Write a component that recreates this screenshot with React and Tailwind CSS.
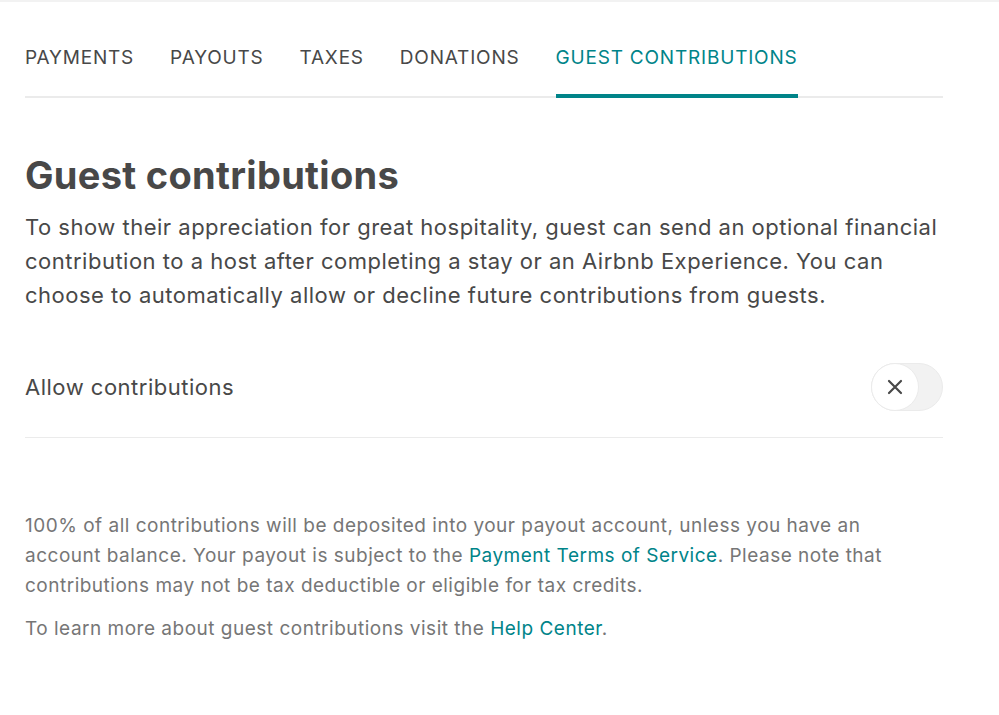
import React, { useState } from "react";

const tabs = ["Payments", "Payouts", "Taxes", "Donations", "Guest contributions"];

const App = () => {
  const [active, setActive] = useState("Guest contributions");
  const [allow, setAllow] = useState(false);

  return (
    <div
      className="min-h-screen bg-white border-t-2 border-[#f2f2f2] text-[#484848]"
      style={{ fontFamily: "Inter, 'Noto Sans', sans-serif" }}
    >
      <div className="w-[918px] ml-[25px]">
        <nav className="flex gap-[36px] border-b-2 border-[#ebebeb] pt-[43px]">
          {tabs.map((t) => (
            <button
              key={t}
              onClick={() => setActive(t)}
              className={
                "uppercase text-[19px] leading-[26px] tracking-[0.8px] pb-[23px] -mb-[2px] border-b-4 " +
                (active === t
                  ? "text-[#008489] border-[#008489]"
                  : "text-[#484848] border-transparent")
              }
            >
              {t}
            </button>
          ))}
        </nav>

        <h1 className="mt-[55px] text-[38px] leading-[44px] font-bold tracking-[0.3px]">
          Guest contributions
        </h1>
        <p className="mt-[13px] text-[22px] leading-[34px] tracking-[0.5px]">
          To show their appreciation for great hospitality, guest can send an optional financial
          contribution to a host after completing a stay or an Airbnb Experience. You can choose to
          automatically allow or decline future contributions from guests.
        </p>

        <div className="mt-[51px] flex items-center justify-between pb-[26px] border-b border-[#ebebeb]">
          <span className="text-[22px] leading-[34px] tracking-[0.5px]">Allow contributions</span>
          <button
            onClick={() => setAllow(!allow)}
            className={
              "relative w-[72px] h-[48px] rounded-full border " +
              (allow ? "bg-[#008489] border-[#008489]" : "bg-[#f2f2f2] border-[#ebebeb]")
            }
          >
            <span
              className={
                "absolute top-[-1px] w-[48px] h-[48px] rounded-full bg-white border border-[#ebebeb] flex items-center justify-center " +
                (allow ? "left-[23px]" : "left-[-1px]")
              }
            >
              {allow ? (
                <svg width="18" height="18" viewBox="0 0 24 24" fill="none" stroke="#008489" strokeWidth="3">
                  <path d="M4 12l5 5 11-11" />
                </svg>
              ) : (
                <svg width="16" height="16" viewBox="0 0 16 16" fill="none" stroke="#484848" strokeWidth="2.2" strokeLinecap="round">
                  <path d="M2 2l12 12M14 2L2 14" />
                </svg>
              )}
            </span>
          </button>
        </div>

        <div className="mt-[73px] w-[880px] text-[19px] leading-[30px] tracking-[0.5px] text-[#767676]">
          <p>
            100% of all contributions will be deposited into your payout account, unless you have an
            account balance. Your payout is subject to the{" "}
            <a className="text-[#008489]">Payment Terms of Service</a>. Please note that
            contributions may not be tax deductible or eligible for tax credits.
          </p>
          <p className="mt-[13px]">
            To learn more about guest contributions visit the{" "}
            <a className="text-[#008489]">Help Center</a>.
          </p>
        </div>
      </div>
    </div>
  );
};

export default App;
